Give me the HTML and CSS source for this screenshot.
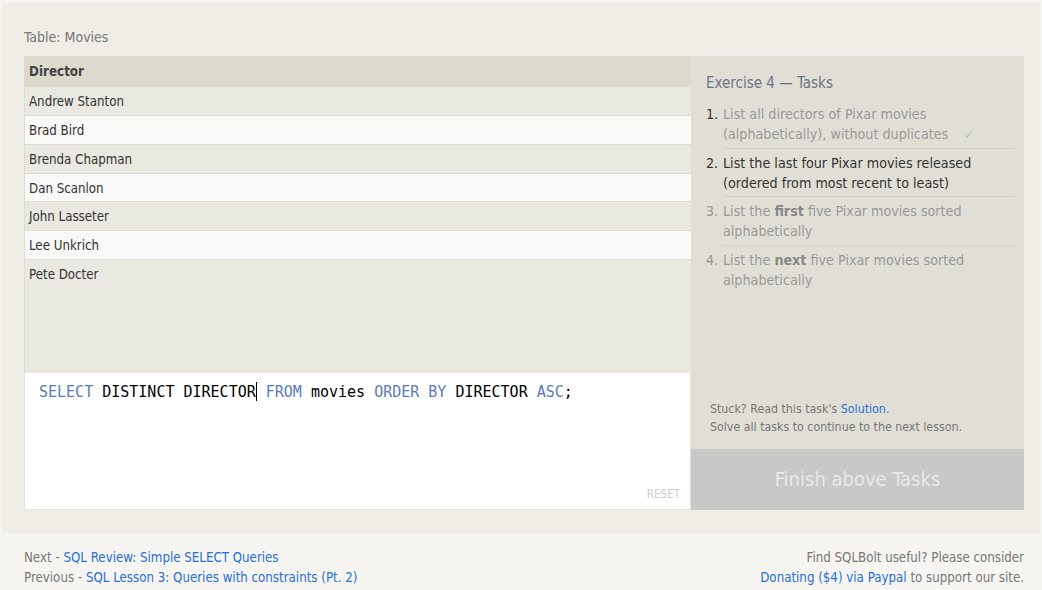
FILE: index.html
```html
<!DOCTYPE html>
<html>
<head>
<meta charset="utf-8">
<link rel="stylesheet" href="styles.css">
</head>
<body>
<div class="main">
  <div class="table-title">Table: Movies</div>
  <div class="workspace">
    <div class="left">
      <div class="results">
        <div class="row head">Director</div>
        <div class="row odd">Andrew Stanton</div>
        <div class="row even">Brad Bird</div>
        <div class="row odd">Brenda Chapman</div>
        <div class="row even">Dan Scanlon</div>
        <div class="row odd">John Lasseter</div>
        <div class="row even">Lee Unkrich</div>
        <div class="row odd last">Pete Docter</div>
      </div>
      <div class="editor">
        <div class="code"><span class="kw">SELECT</span> DISTINCT DIRECTOR<span class="cursor"></span> <span class="kw">FROM</span> movies <span class="kw">ORDER BY</span> DIRECTOR <span class="kw">ASC</span>;</div>
        <div class="reset">RESET</div>
      </div>
    </div>
    <div class="right">
      <div class="tasks">
        <div class="ex-title">Exercise 4 — Tasks</div>
        <ol class="task-list">
          <li class="task done"><span class="num">1.</span><span class="txt">List all directors of Pixar movies (alphabetically), without duplicates <span class="check">✓</span></span></li>
          <li class="task current"><span class="num">2.</span><span class="txt">List the last four Pixar movies released (ordered from most recent to least)</span></li>
          <li class="task todo"><span class="num">3.</span><span class="txt">List the <b>first</b> five Pixar movies sorted alphabetically</span></li>
          <li class="task todo nob"><span class="num">4.</span><span class="txt">List the <b>next</b> five Pixar movies sorted alphabetically</span></li>
        </ol>
      </div>
      <div class="stuck">
        <div>Stuck? Read this task's <a class="link" href="#">Solution</a>.</div>
        <div>Solve all tasks to continue to the next lesson.</div>
      </div>
      <div class="finish">Finish above Tasks</div>
    </div>
  </div>
</div>
<div class="footer">
  <div class="f-left">
    <div>Next - <a class="link" href="#">SQL Review: Simple SELECT Queries</a></div>
    <div>Previous - <a class="link" href="#">SQL Lesson 3: Queries with constraints (Pt. 2)</a></div>
  </div>
  <div class="f-right">
    <div>Find SQLBolt useful? Please consider</div>
    <div><a class="link" href="#">Donating ($4) via Paypal</a> to support our site.</div>
  </div>
</div>
</body>
</html>
```
FILE: styles.css
```css
* { box-sizing: border-box; }
html, body { margin: 0; padding: 0; }
body {
  background: #f6f5f1;
  font-family: "DejaVu Sans Condensed", "DejaVu Sans", sans-serif;
  color: #333;
  width: 1042px;
  height: 590px;
  overflow: hidden;
}
.main {
  margin: 3px 2px 0 2px;
  background: #efede6;
  padding: 24px 16px 23px 22px;
  height: 530px;
}
.table-title {
  font-size: 14px;
  line-height: 21px;
  color: #777;
  margin-bottom: 8px;
}
.workspace {
  display: flex;
  height: 454px;
}
.left {
  width: 667px;
  display: flex;
  flex-direction: column;
}
.results {
  height: 317px;
  background: #e9e8e1;
  border-left: 1px solid #dddcd4;
}
.row {
  height: 28.85px;
  line-height: 28px;
  padding-top: 1px;
  padding-left: 4px;
  font-size: 13.2px;
  color: #333;
  border-bottom: 1px solid #dcdbd4;
}
.row.last { border-bottom: none; }
.row.head {
  height: 31px;
  line-height: 31px;
  padding-top: 0;
  background: #dbdacd;
  font-weight: bold;
  font-size: 13.3px;
  color: #444;
  border-bottom: none;
}
.row.odd { background: #e9e8e1; }
.row.even { background: #f8f8f7; }
.editor {
  flex: 1;
  background: #fff;
  border: 1px solid #e2e1da;
  border-top: none;
  position: relative;
  padding: 9px 14px;
}
.code {
  font-family: "DejaVu Sans Mono", monospace;
  font-size: 15px;
  line-height: 20px;
  color: #000;
}
.kw { color: #5a7bbd; }
.cursor {
  display: inline-block;
  width: 1px;
  height: 19px;
  background: #000;
  vertical-align: -4px;
}
.reset {
  position: absolute;
  right: 10px;
  bottom: 8px;
  font-size: 11.5px;
  color: #ccc;
}
.right {
  width: 333px;
  background: #e1dfd5;
  display: flex;
  flex-direction: column;
}
.tasks {
  padding: 17px 9px 0 15px;
}
.ex-title {
  font-size: 15px;
  line-height: 20px;
  color: #6a7388;
  margin-bottom: 11px;
}
.task-list {
  list-style: none;
  margin: 0;
  padding: 0;
}
.task {
  display: flex;
  font-size: 14.2px;
  line-height: 20px;
  color: #999;
}
.task .num { width: 17px; flex: none; }
.task .txt {
  flex: 1;
  padding-bottom: 4px;
  border-bottom: 1px solid #d3d1c6;
  margin-bottom: 4px;
}
.task.current .txt { padding-bottom: 3px; }
.task.nob .txt { border-bottom: none; }
.task.done .num { color: #333; }
.task.current { color: #333; }
.task b { color: #888; }
.check { color: #8fcf8f; font-size: 12px; margin-left: 12px; line-height: 0; }
.stuck {
  margin-top: auto;
  padding: 0 15px 13px 19px;
  font-size: 12.3px;
  line-height: 18px;
  color: #777;
}
.link { color: #2a6fd6; text-decoration: none; }
.finish {
  height: 61px;
  background: #c8c8c8;
  color: #e9e9e9;
  font-size: 20px;
  line-height: 61px;
  text-align: center;
}
.footer {
  display: flex;
  justify-content: space-between;
  padding: 15px 18px 0 24px;
  font-size: 13.2px;
  line-height: 20px;
  color: #777;
}
.f-right { text-align: right; }
```
